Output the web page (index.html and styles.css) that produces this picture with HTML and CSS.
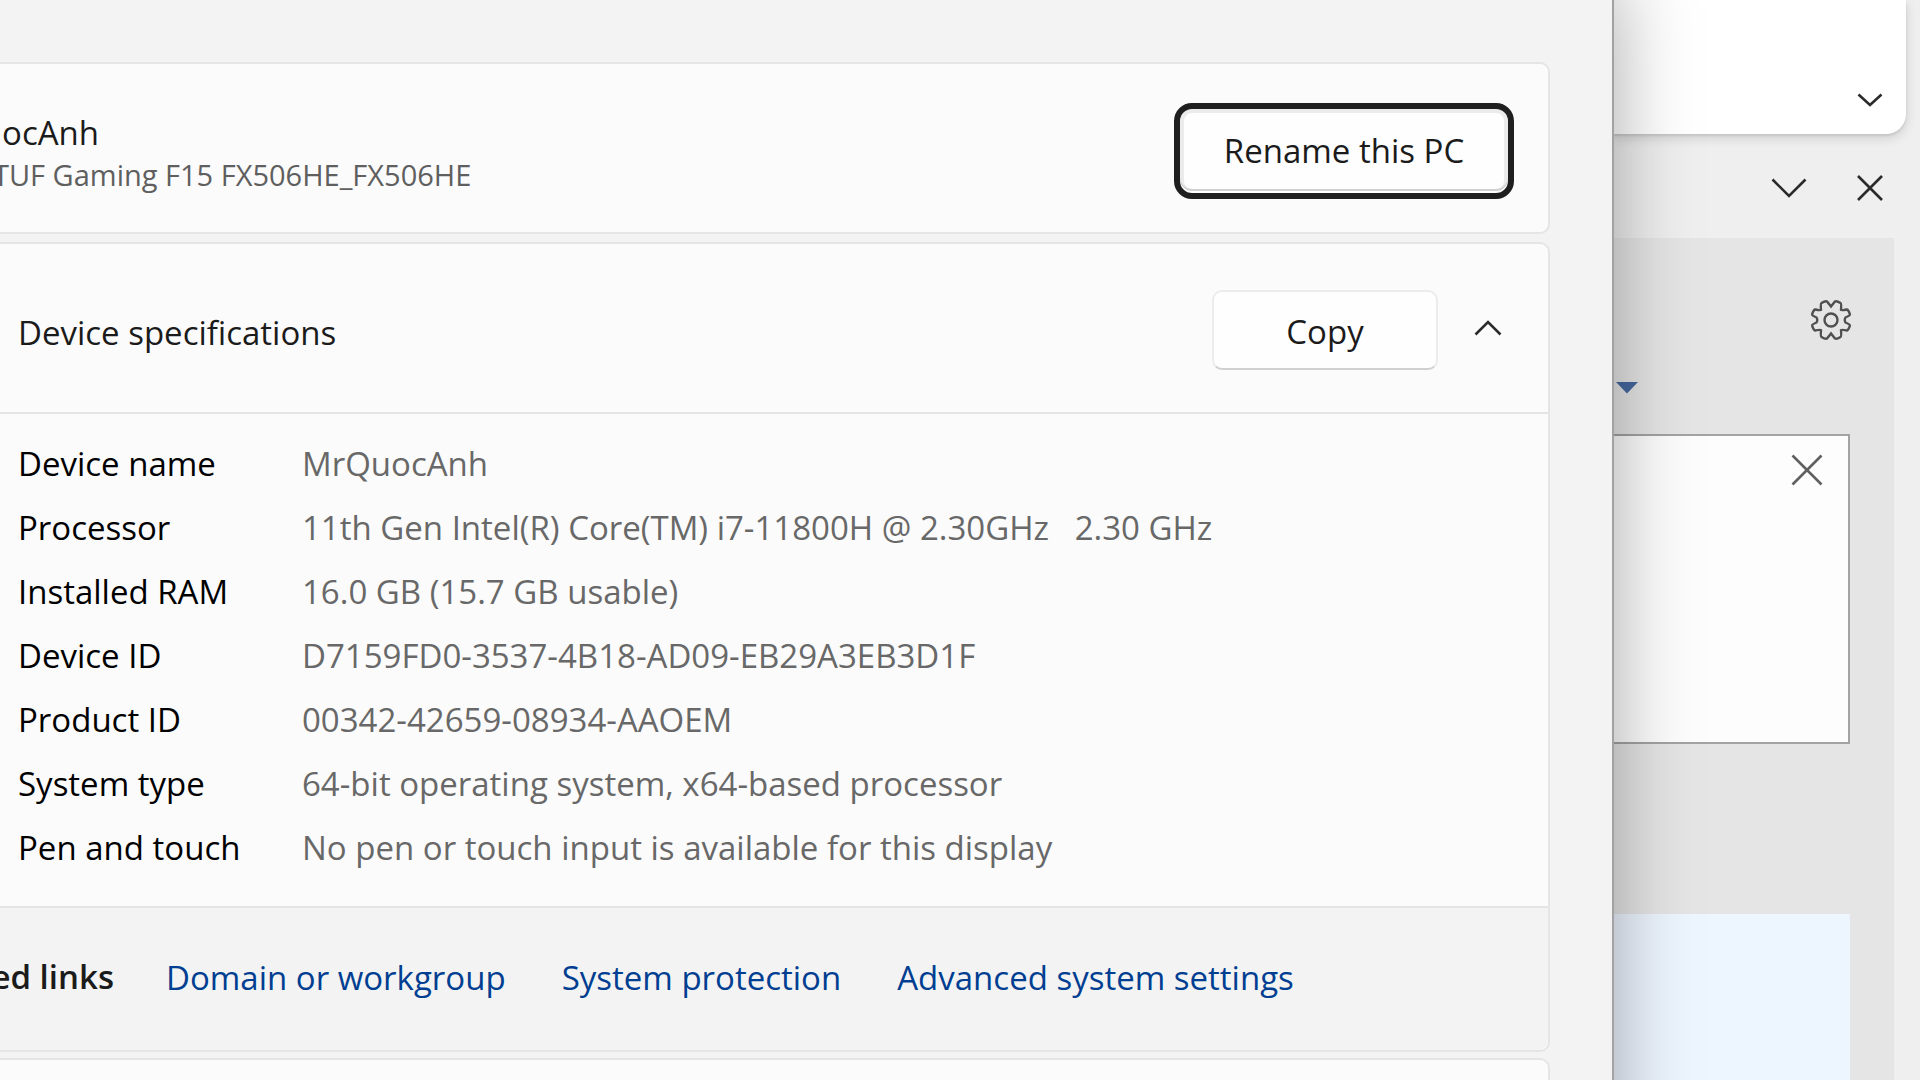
FILE: index.html
```html
<!DOCTYPE html>
<html lang="en">
<head>
<meta charset="utf-8">
<title>About</title>
<link rel="stylesheet" href="styles.css">
</head>
<body>
<div class="desktop">
  <main class="settings">
    <section class="card pc-card">
      <div class="pc-text">
        <h1 class="pc-name">MrQuocAnh</h1>
        <p class="pc-model">TUF Gaming F15 FX506HE_FX506HE</p>
      </div>
      <button class="button rename" type="button">Rename this PC</button>
    </section>

    <section class="card specs">
      <header class="specs-head">
        <h2 class="specs-title">Device specifications</h2>
        <button class="button copy" type="button">Copy</button>
        <button class="icon-button collapse" type="button" aria-label="Collapse">
          <svg width="28" height="16" viewBox="0 0 28 16"><path d="M1.500 14.500 14 2l12.500 12.500"/></svg>
        </button>
      </header>
      <table class="spec-table">
        <tbody>
          <tr><th scope="row">Device name</th><td>MrQuocAnh</td></tr>
          <tr><th scope="row">Processor</th><td>11th Gen Intel(R) Core(TM) i7-11800H @ 2.30GHz &nbsp; 2.30 GHz</td></tr>
          <tr><th scope="row">Installed RAM</th><td>16.0 GB (15.7 GB usable)</td></tr>
          <tr><th scope="row">Device ID</th><td>D7159FD0-3537-4B18-AD09-EB29A3EB3D1F</td></tr>
          <tr><th scope="row">Product ID</th><td>00342-42659-08934-AAOEM</td></tr>
          <tr><th scope="row">System type</th><td>64-bit operating system, x64-based processor</td></tr>
          <tr><th scope="row">Pen and touch</th><td>No pen or touch input is available for this display</td></tr>
        </tbody>
      </table>
      <nav class="related" aria-label="Related links">
        <span class="related-title">Related links</span>
        <a href="#domain">Domain or workgroup</a>
        <a href="#protection">System protection</a>
        <a href="#advanced">Advanced system settings</a>
      </nav>
    </section>

    <section class="card next-card"></section>
  </main>

  <aside class="editor">
    <div class="ribbon">
      <button class="icon-button" type="button" aria-label="Ribbon options">
        <svg width="26" height="14" viewBox="0 0 26 14"><path d="M1.500 1.500 13 12 24.500 1.500"/></svg>
      </button>
    </div>
    <div class="pane-bar">
      <button class="icon-button" type="button" aria-label="Pane options">
        <svg width="36" height="20" viewBox="0 0 36 20"><path d="M1.500 1.500 18 18 34.500 1.500"/></svg>
      </button>
      <button class="icon-button" type="button" aria-label="Close pane">
        <svg width="26" height="26" viewBox="0 0 26 26"><path d="M1 1l24 24M25 1 1 25"/></svg>
      </button>
    </div>
    <div class="pane">
      <button class="icon-button gear" type="button" aria-label="Settings">
        <svg width="40" height="40" viewBox="-20 -20 40 40">
          <path d="M0-13.500 4-18.500Q5.500-19.500 9.500-17Q10.500-16.500 10-10Q10.500-9.500 16-10.500Q17.500-10 19-5.500Q19-4.500 14.500-2.500Q13 0 14.500 2.500Q19 4.500 19 5.500Q17.500 10 16 10.500Q10.500 9.500 10 10Q10.500 16.500 9.500 17Q5.500 19.500 4 18.500L0 13.500-4 18.500Q-5.500 19.500-9.500 17Q-10.500 16.500-10 10Q-10.500 9.500-16 10.500Q-17.500 10-19 5.500Q-19 4.500-14.500 2.500Q-13 0-14.500-2.500Q-19-4.500-19-5.500Q-17.500-10-16-10.500Q-10.500-9.500-10-10Q-10.500-16.500-9.500-17Q-5.500-19.500-4-18.500Z"/>
          <circle r="6.500"/>
        </svg>
      </button>
      <button class="icon-button drop" type="button" aria-label="More">
        <svg width="22" height="12" viewBox="0 0 22 12"><path d="M0 0h22L11 11.500Z"/></svg>
      </button>
      <div class="note">
        <button class="icon-button" type="button" aria-label="Close note">
          <svg width="32" height="32" viewBox="0 0 32 32"><path d="M1.500 1.500l29 29M30.500 1.500l-29 29"/></svg>
        </button>
      </div>
      <div class="blue-panel"></div>
    </div>
  </aside>
</div>
</body>
</html>
```
FILE: styles.css
```css
* { box-sizing: border-box; }

body {
  margin: 0;
  height: 100vh;
  overflow: hidden;
  background: #efefef;
  color: #1b1b1b;
  font: 33px/48px "Open Sans", "Noto Sans", sans-serif;
}

h1, h2, p { margin: 0; font-size: inherit; font-weight: 400; }

.desktop { display: flex; align-items: flex-start; height: 100vh; overflow: hidden; }

/* Settings window */
.settings {
  position: relative;
  z-index: 1;
  flex: 1;
  min-width: 0;
  min-height: 115vh;
  padding: 62px 62px 0 0;
  border-right: 2px solid #a2a2a2;
  background: #f3f3f3;
  box-shadow: 0 -20px 76px rgba(0, 0, 0, .34);
}

.card {
  border: 2px solid #e5e5e5;
  border-left: 0;
  border-radius: 0 10px 10px 0;
  background: #fbfbfb;
}

.pc-card {
  display: flex;
  align-items: center;
  justify-content: space-between;
  height: 172px;
  margin-bottom: 8px;
  padding: 6px 34px 0 0;
}

.pc-text { margin-left: -87px; padding-top: 4px; }
.pc-name { line-height: 44px; }
.pc-model { padding-left: 80px; color: #5f5f5f; font-size: 29px; line-height: 40px; }

.button {
  border: 2px solid #ececec;
  border-bottom-color: #d0d0d0;
  border-radius: 10px;
  background: #fefefe;
  color: #1b1b1b;
  font: inherit;
}

.rename {
  width: 328px;
  height: 84px;
  margin-right: 6px;
  border: 0;
  border-radius: 12px;
  outline: 6px solid #1f1f1f;
  box-shadow: inset 0 -2px #fefefe, inset 0 -4px #d0d0d0, inset 0 0 0 4px #ebebeb;
}

.specs { margin-bottom: 6px; }

.specs-head {
  display: flex;
  align-items: center;
  height: 170px;
  padding: 4px 46px 0 18px;
  border-bottom: 2px solid #e5e5e5;
}

.specs-title { flex: 1; padding-top: 6px; }
.copy { width: 226px; height: 80px; padding-top: 4px; }

.icon-button {
  display: flex;
  padding: 0;
  border: 0;
  background: none;
}

.icon-button svg { fill: none; stroke: #2b2b2b; stroke-width: 2.6; }
.collapse { margin-left: 36px; padding-bottom: 4px; }

.spec-table {
  width: 100%;
  margin: 18px 0 26px;
  border-collapse: collapse;
}

.spec-table th, .spec-table td { height: 64px; padding: 0; text-align: left; font-weight: 400; }
.spec-table th { width: 302px; padding-left: 18px; color: #000; }
.spec-table td { color: #686868; }

.related {
  display: flex;
  align-items: center;
  gap: 56px;
  height: 144px;
  padding-bottom: 2px;
  border-top: 2px solid #e5e5e5;
  background: #f3f3f3;
  border-radius: 0 0 10px 0;
}

.related-title { margin: 0 -4px 2px -90px; font-weight: 600; }
.related a { color: #003e92; text-decoration: none; }

.next-card { height: 170px; }

/* Document editor behind the settings window */
.editor { width: 306px; }

.ribbon {
  display: flex;
  justify-content: flex-end;
  align-items: flex-end;
  height: 134px;
  margin-right: 14px;
  padding: 0 23px 27px 0;
  border-radius: 0 0 20px 0;
  background: #fff;
  box-shadow: 0 2px 2px #c8c8c8, 0 4px 12px rgba(0, 0, 0, .14);
}

.pane-bar {
  display: flex;
  justify-content: flex-end;
  align-items: center;
  gap: 50px;
  height: 104px;
  padding: 4px 37px 0 0;
}

.pane {
  min-height: 100vh;
  margin-right: 26px;
  padding-top: 62px;
  background: #e5e5e5;
}

.gear { margin: 0 43px 0 auto; }
.gear svg { stroke: #505050; stroke-width: 2.4; }
.drop { margin: 42px 0 40px 2px; }
.drop svg { fill: #4669a0; stroke: none; }

.note {
  display: flex;
  justify-content: flex-end;
  align-items: flex-start;
  height: 310px;
  margin: 0 44px 170px 0;
  padding: 18px 25px 0 0;
  border: 2px solid #a3a3a3;
  border-left: 0;
  background: #fdfdfd;
}

.note svg { stroke: #606060; }

.blue-panel { height: 400px; margin-right: 44px; background: #edf5ff; }
```
